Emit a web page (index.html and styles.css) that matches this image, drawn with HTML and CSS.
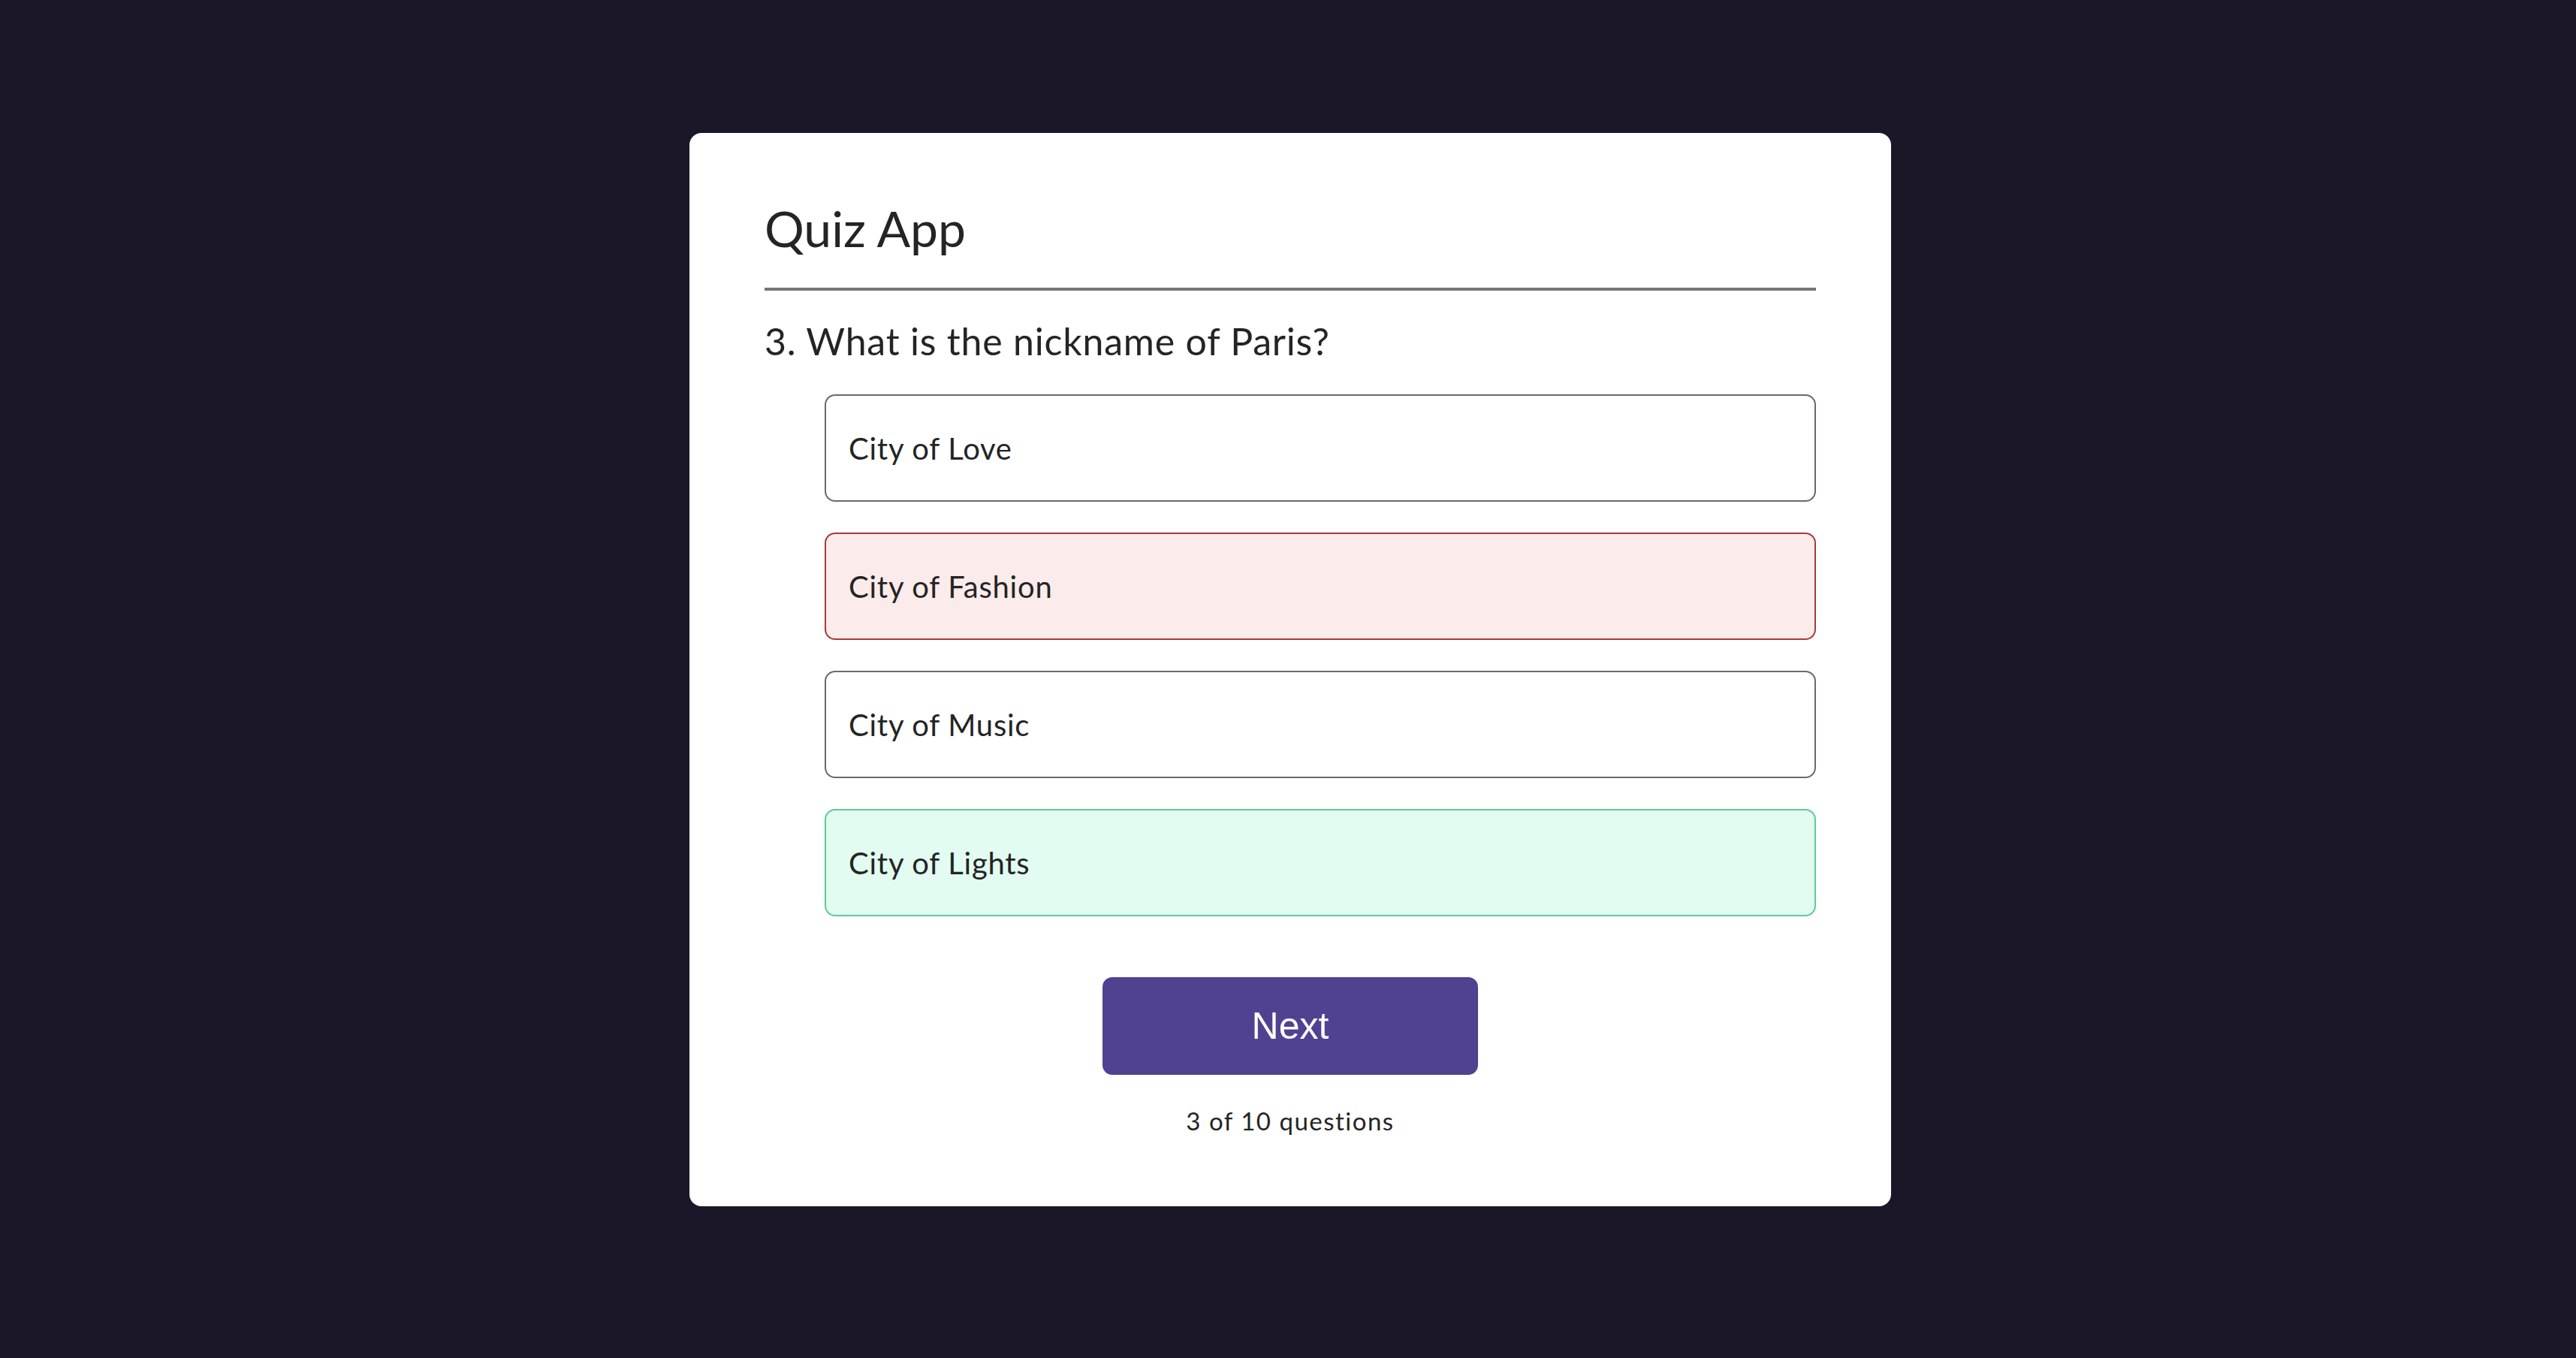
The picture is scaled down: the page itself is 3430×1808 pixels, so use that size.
FILE: index.html
```
<!DOCTYPE html>
<html lang="en">
<head>
<meta charset="utf-8">
<title>Quiz App</title>
<link rel="stylesheet" href="styles.css">
</head>
<body>
  <main class="card">
    <h1 class="title">Quiz App</h1>
    <div class="rule"></div>
    <h2 class="question">3. What is the nickname of Paris?</h2>
    <ul class="answers">
      <li class="answer">City of Love</li>
      <li class="answer wrong">City of Fashion</li>
      <li class="answer">City of Music</li>
      <li class="answer correct">City of Lights</li>
    </ul>
    <div class="actions">
      <button class="next-btn" type="button">Next</button>
    </div>
    <p class="progress">3 of 10 questions</p>
  </main>
</body>
</html>
```

FILE: styles.css
```
* {
  box-sizing: border-box;
}

html, body {
  margin: 0;
  padding: 0;
}

body {
  background: #1b1628;
  font-family: "Lato", "Open Sans", sans-serif;
  color: #242424;
  min-height: 100vh;
  padding-top: 177px;
}

.card {
  width: 1600px;
  margin: 0 auto;
  transform: translateX(3px);
  background: #ffffff;
  border-radius: 16px;
  padding: 94px 100px 97px;
  display: flex;
  flex-direction: column;
}

.title {
  margin: 0;
  font-size: 66px;
  line-height: 1;
  font-weight: 400;
  color: #242424;
}

.rule {
  margin-top: 46px;
  height: 4px;
  background: #767676;
}

.question {
  margin: 42px 0 0;
  font-size: 50px;
  line-height: 1;
  font-weight: 400;
  letter-spacing: 0.8px;
  color: #242424;
}

.answers {
  list-style: none;
  margin: 46px 0 0;
  padding: 0 0 0 80px;
  display: flex;
  flex-direction: column;
  gap: 41px;
}

.answer {
  height: 143px;
  border: 2px solid #6a6a6a;
  border-radius: 14px;
  padding: 0 30px;
  display: flex;
  align-items: center;
  font-size: 40px;
  line-height: 1;
  letter-spacing: 0.75px;
  color: #242424;
  background: #ffffff;
}

.answer.wrong {
  border-color: #a83a3a;
  background: #fcebeb;
}

.answer.correct {
  border-color: #5ccd98;
  background: #e2fcf1;
}

.actions {
  margin-top: 81px;
  display: flex;
  justify-content: center;
}

.next-btn {
  width: 500px;
  height: 130px;
  border: none;
  border-radius: 13px;
  background: #514191;
  color: #ffffff;
  font-family: "Liberation Sans", Arial, sans-serif;
  font-size: 50px;
  font-weight: 400;
  display: flex;
  align-items: center;
  justify-content: center;
  padding: 0;
}

.progress {
  margin: 45px 0 0;
  text-align: center;
  font-size: 33px;
  line-height: 1;
  letter-spacing: 1.5px;
  color: #242424;
}
```
